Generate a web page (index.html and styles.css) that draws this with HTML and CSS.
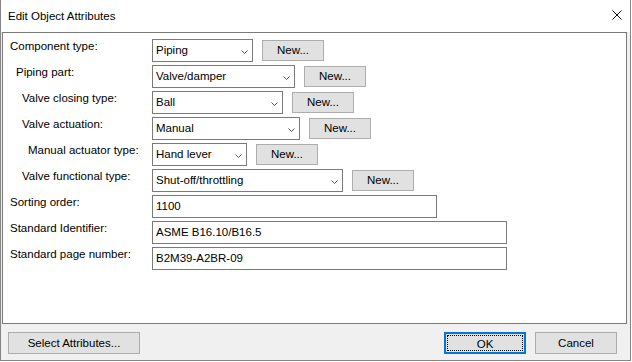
FILE: index.html
```html
<!doctype html>
<html>
<head>
<meta charset="utf-8">
<title>Edit Object Attributes</title>
<link rel="stylesheet" href="styles.css">
</head>
<body>
<div class="dlg">
	<div class="titlebar">
		<span class="title">Edit Object Attributes</span>
		<svg class="close" width="10" height="10" viewBox="0 0 10 10"><path d="M0.5 0.5L9.5 9.5M9.5 0.5L0.5 9.5"/></svg>
	</div>
	<div class="panel">
		<div class="row">
			<label class="lbl">Component type:</label>
			<div class="combo w1"><span>Piping</span><svg class="chev" width="7" height="4" viewBox="0 0 7 4"><polyline points="0.5,0.5 3.5,3.5 6.5,0.5"/></svg></div>
			<button class="btn">New...</button>
		</div>
		<div class="row">
			<label class="lbl l1">Piping part:</label>
			<div class="combo w2"><span>Valve/damper</span><svg class="chev" width="7" height="4" viewBox="0 0 7 4"><polyline points="0.5,0.5 3.5,3.5 6.5,0.5"/></svg></div>
			<button class="btn">New...</button>
		</div>
		<div class="row">
			<label class="lbl l2">Valve closing type:</label>
			<div class="combo w3"><span>Ball</span><svg class="chev" width="7" height="4" viewBox="0 0 7 4"><polyline points="0.5,0.5 3.5,3.5 6.5,0.5"/></svg></div>
			<button class="btn">New...</button>
		</div>
		<div class="row">
			<label class="lbl l2">Valve actuation:</label>
			<div class="combo w4"><span>Manual</span><svg class="chev" width="7" height="4" viewBox="0 0 7 4"><polyline points="0.5,0.5 3.5,3.5 6.5,0.5"/></svg></div>
			<button class="btn">New...</button>
		</div>
		<div class="row">
			<label class="lbl l3">Manual actuator type:</label>
			<div class="combo w5"><span>Hand lever</span><svg class="chev" width="7" height="4" viewBox="0 0 7 4"><polyline points="0.5,0.5 3.5,3.5 6.5,0.5"/></svg></div>
			<button class="btn">New...</button>
		</div>
		<div class="row">
			<label class="lbl l2">Valve functional type:</label>
			<div class="combo w6"><span>Shut-off/throttling</span><svg class="chev" width="7" height="4" viewBox="0 0 7 4"><polyline points="0.5,0.5 3.5,3.5 6.5,0.5"/></svg></div>
			<button class="btn">New...</button>
		</div>
		<div class="row">
			<label class="lbl">Sorting order:</label>
			<div class="edit w7">1100</div>
		</div>
		<div class="row">
			<label class="lbl">Standard Identifier:</label>
			<div class="edit w8">ASME B16.10/B16.5</div>
		</div>
		<div class="row">
			<label class="lbl">Standard page number:</label>
			<div class="edit w8">B2M39-A2BR-09</div>
		</div>
	</div>
	<div class="footer">
		<button class="fbtn sel">Select Attributes...</button>
		<span class="spacer"></span>
		<button class="fbtn ok">OK</button>
		<button class="fbtn">Cancel</button>
	</div>
</div>
</body>
</html>
```

FILE: styles.css
```css
*{margin:0; padding:0; box-sizing:border-box;}
body{background:#fff; font-family:"Liberation Sans", Arial, sans-serif; font-size:11.5px; color:#000;}
.dlg{width:631px; height:361px; background:#f0f0f0; border-left:1px solid #858585; border-right:1px solid #858585; border-bottom:1px solid #858585; display:flex; flex-direction:column;}

.titlebar{height:32px; background:#fff; display:flex; align-items:center; justify-content:space-between; padding:0 8px 0 7px;}
.title{font-size:11.5px; line-height:14px;}
.close{display:block; margin-top:-2px;}
.close path{stroke:#111; stroke-width:1; fill:none;}

.panel{height:292px; margin:0 3px 0 1px; background:#fff; border:1px solid #7a7a7a; padding:6px 0 0 7px; display:flex; flex-direction:column; gap:3px;}
.row{display:flex; align-items:center; height:23px;}
.lbl{width:142px; align-self:flex-start; padding-top:1px; line-height:13px; white-space:nowrap;}
.l1{padding-left:6px;}
.l2{padding-left:12px;}
.l3{padding-left:18px;}

.combo, .edit{height:23px; border:1px solid #7a7a7a; background:#fff; display:flex; align-items:center; padding:0 4px 0 3px; line-height:21px; white-space:nowrap;}
.chev{margin-left:auto; margin-top:2px; display:block;}
.chev polyline{stroke:#555; stroke-width:1; fill:none;}
.w1{width:101px;}
.w2{width:143px;}
.w3{width:131px;}
.w4{width:148px;}
.w5{width:95px;}
.w6{width:191px;}
.w7{width:285px;}
.w8{width:355px;}

.btn{width:62px; height:21px; margin-left:9px; background:#e1e1e1; border:1px solid #adadad; font-family:inherit; font-size:11.5px; color:#000; line-height:19px;}

.footer{flex:1; display:flex; align-items:flex-start; padding:8px 13px 0 7px;}
.spacer{flex:1;}
.fbtn{height:22px; width:82px; background:#e1e1e1; border:1px solid #adadad; font-family:inherit; font-size:11.5px; color:#000; line-height:20px;}
.sel{width:132px;}
.ok{margin-right:9px; border:2px solid #0078d7; outline:1px dotted #000; outline-offset:-4px;}
```
